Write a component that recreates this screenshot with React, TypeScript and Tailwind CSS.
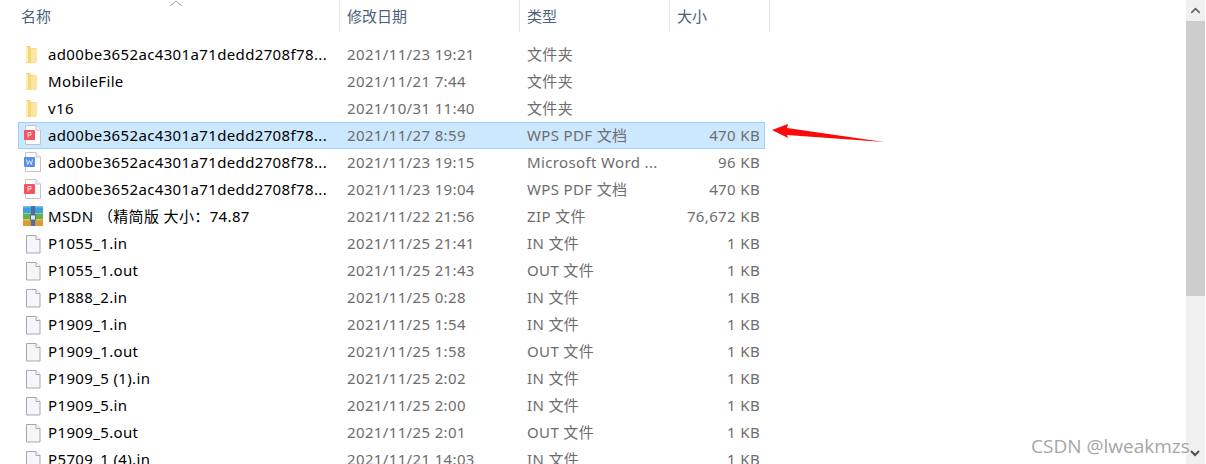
import { ChevronUp } from "lucide-react";

type Kind = "folder" | "pdf" | "word" | "pdfOld" | "zip" | "blank";

const longName = "ad00be3652ac4301a71dedd2708f78...";

const rows: { kind: Kind; name: string; date: string; type: string; size: string; selected?: boolean }[] = [
  { kind: "folder", name: longName, date: "2021/11/23 19:21", type: "文件夹", size: "" },
  { kind: "folder", name: "MobileFile", date: "2021/11/21 7:44", type: "文件夹", size: "" },
  { kind: "folder", name: "v16", date: "2021/10/31 11:40", type: "文件夹", size: "" },
  { kind: "pdf", name: longName, date: "2021/11/27 8:59", type: "WPS PDF 文档", size: "470 KB", selected: true },
  { kind: "word", name: longName, date: "2021/11/23 19:15", type: "Microsoft Word ...", size: "96 KB" },
  { kind: "pdfOld", name: longName, date: "2021/11/23 19:04", type: "WPS PDF 文档", size: "470 KB" },
  { kind: "zip", name: "MSDN （精简版 大小：74.87", date: "2021/11/22 21:56", type: "ZIP 文件", size: "76,672 KB" },
  { kind: "blank", name: "P1055_1.in", date: "2021/11/25 21:41", type: "IN 文件", size: "1 KB" },
  { kind: "blank", name: "P1055_1.out", date: "2021/11/25 21:43", type: "OUT 文件", size: "1 KB" },
  { kind: "blank", name: "P1888_2.in", date: "2021/11/25 0:28", type: "IN 文件", size: "1 KB" },
  { kind: "blank", name: "P1909_1.in", date: "2021/11/25 1:54", type: "IN 文件", size: "1 KB" },
  { kind: "blank", name: "P1909_1.out", date: "2021/11/25 1:58", type: "OUT 文件", size: "1 KB" },
  { kind: "blank", name: "P1909_5 (1).in", date: "2021/11/25 2:02", type: "IN 文件", size: "1 KB" },
  { kind: "blank", name: "P1909_5.in", date: "2021/11/25 2:00", type: "IN 文件", size: "1 KB" },
  { kind: "blank", name: "P1909_5.out", date: "2021/11/25 2:01", type: "OUT 文件", size: "1 KB" },
  { kind: "blank", name: "P5709_1 (4).in", date: "2021/11/21 14:03", type: "IN 文件", size: "1 KB" },
];

function BlankPage() {
  return (
    <svg width="20" height="22" viewBox="0 0 20 22" className="block">
      <path d="M4.5 2.5h9.5l4 4v13.5h-13.500z" fill="#f5f6fa" stroke="#a8a8ac" />
      <path d="M14 2.500v4h4" fill="#ffffff" stroke="#a8a8ac" />
    </svg>
  );
}

function BadgePage({ badge, mark }: { badge: string; mark: "p" | "w" }) {
  return (
    <svg width="20" height="22" viewBox="0 0 20 22" className="block">
      <path d="M3.500 0.500h10.500l4.500 4.500v14.500h-15z" fill="#ffffff" stroke="#c4c4c8" />
      <path d="M14 0.500v4.500h4.500" fill="#f2f2f4" stroke="#c4c4c8" />
      <rect x="2" y="5" width="11" height="10" rx="1" fill={badge} />
      {mark === "p" ? (
        <path d="M6 12.500v-5h3v2.500h-3" fill="none" stroke="#ffe0e2" strokeWidth="1" />
      ) : (
        <path d="M4.500 7.500l1.200 5 1.800-4 1.800 4 1.200-5" fill="none" stroke="#dce8ff" strokeWidth="1" />
      )}
    </svg>
  );
}

function FileIcon({ kind }: { kind: Kind }) {
  if (kind === "folder") {
    return (
      <svg width="20" height="20" viewBox="0 0 20 20" className="block">
        <path d="M4 1h4l1 2h5v15H4z" fill="#f7d774" />
        <path d="M9 4l6-1v14l-6 1.500z" fill="#fbe6a2" />
        <path d="M4 2h2v16l-2-1z" fill="#fdeeb9" />
      </svg>
    );
  }
  if (kind === "zip") {
    return (
      <svg width="21" height="22" viewBox="-1 0 21 22" className="block">
        <rect x="0" y="0" width="20" height="7" fill="#3f9fdc" />
        <rect x="0" y="7" width="20" height="6.500" fill="#62b34f" />
        <rect x="0" y="13.500" width="20" height="6.500" fill="#dd9a2e" />
        <path d="M0 0h20v1.500H0zM0 7h20v1H0zM0 13.500h20v1H0z" fill="#ffffff" opacity="0.3" />
        <rect x="8" y="0" width="4" height="20" fill="#4a6fa8" />
        <rect x="7.500" y="9" width="5" height="5" fill="#e4e8ee" stroke="#4d5a70" strokeWidth="0.8" />
      </svg>
    );
  }
  if (kind === "pdf" || kind === "pdfOld") return <BadgePage badge="#f4555f" mark="p" />;
  if (kind === "word") return <BadgePage badge="#5a8fe8" mark="w" />;
  return <BlankPage />;
}

export default function App() {
  return (
    <div className="relative flex h-[464px] w-[1206px] overflow-hidden bg-white font-['Noto_Sans','Noto_Sans_CJK_SC',sans-serif] text-[15px]">
      <div className="w-[1186px] shrink-0">
        {/* Column header */}
        <div className="flex h-[32px] items-center text-[#4c607a]">
          <div className="flex h-full w-[340px] items-center border-r border-[#e5e5e5] pl-[21px]">名称</div>
          <div className="flex h-full w-[180px] items-center border-r border-[#e5e5e5] pl-[7px]">修改日期</div>
          <div className="flex h-full w-[150px] items-center border-r border-[#e5e5e5] pl-[7px]">类型</div>
          <div className="flex h-full w-[100px] items-center border-r border-[#e5e5e5] pl-[7px]">大小</div>
        </div>

        {/* File rows */}
        <div className="ml-[18px] w-[747px] pt-[9px] tracking-[0.36px]">
          {rows.map((row, i) => (
            <div
              key={i}
              className={
                row.selected
                  ? "flex h-[27px] items-center border border-[#99d1ff] bg-[#cce8ff]"
                  : "flex h-[27px] items-center border border-transparent"
              }
            >
              <div className="ml-[3px] flex w-[26px] shrink-0 items-center">
                <FileIcon kind={row.kind} />
              </div>
              <div className="w-[299px] shrink-0 whitespace-nowrap text-[#000000]">{row.name}</div>
              <div className="w-[180px] shrink-0 whitespace-nowrap text-[#6d6d6d]">{row.date}</div>
              <div className="w-[126px] shrink-0 whitespace-nowrap text-[#6d6d6d]">{row.type}</div>
              <div className="w-[107px] shrink-0 whitespace-nowrap text-right text-[#6d6d6d]">{row.size}</div>
            </div>
          ))}
        </div>
      </div>

      {/* Scrollbar */}
      <div className="flex h-full w-[19px] shrink-0 flex-col bg-[#f0f0f0]">
        <div className="flex h-[21px] items-center justify-center text-[#606060]">
          <ChevronUp size={15} strokeWidth={2.5} />
        </div>
        <div className="h-[275px] bg-[#cdcdcd]" />
      </div>

      {/* Sort arrow */}
      <svg width="14" height="7" viewBox="0 0 14 7" className="absolute left-[169px] top-0">
        <path d="M1 6l6-5 6 5" fill="none" stroke="#a0a4aa" strokeWidth="1" />
      </svg>

      {/* Annotation arrow */}
      <svg width="120" height="24" viewBox="0 0 120 24" className="absolute left-[770px] top-[122px]">
        <path d="M2 8L18 2l-1 4L114 20 17 13l1 3z" fill="#fb0a0a" />
      </svg>

      {/* Scroll down arrow */}
      <svg width="12" height="8" viewBox="0 0 12 8" className="absolute left-[1189px] top-[449px]">
        <path d="M2 2l4 4 4-4" fill="none" stroke="#505050" strokeWidth="2" />
      </svg>

      {/* Watermark */}
      <div className="absolute left-[1031px] top-[433px] font-['Open_Sans',sans-serif] text-[19px] leading-[26px] whitespace-nowrap text-[#a6a6a6]">
        CSDN @lweakmzs
      </div>
    </div>
  );
}
